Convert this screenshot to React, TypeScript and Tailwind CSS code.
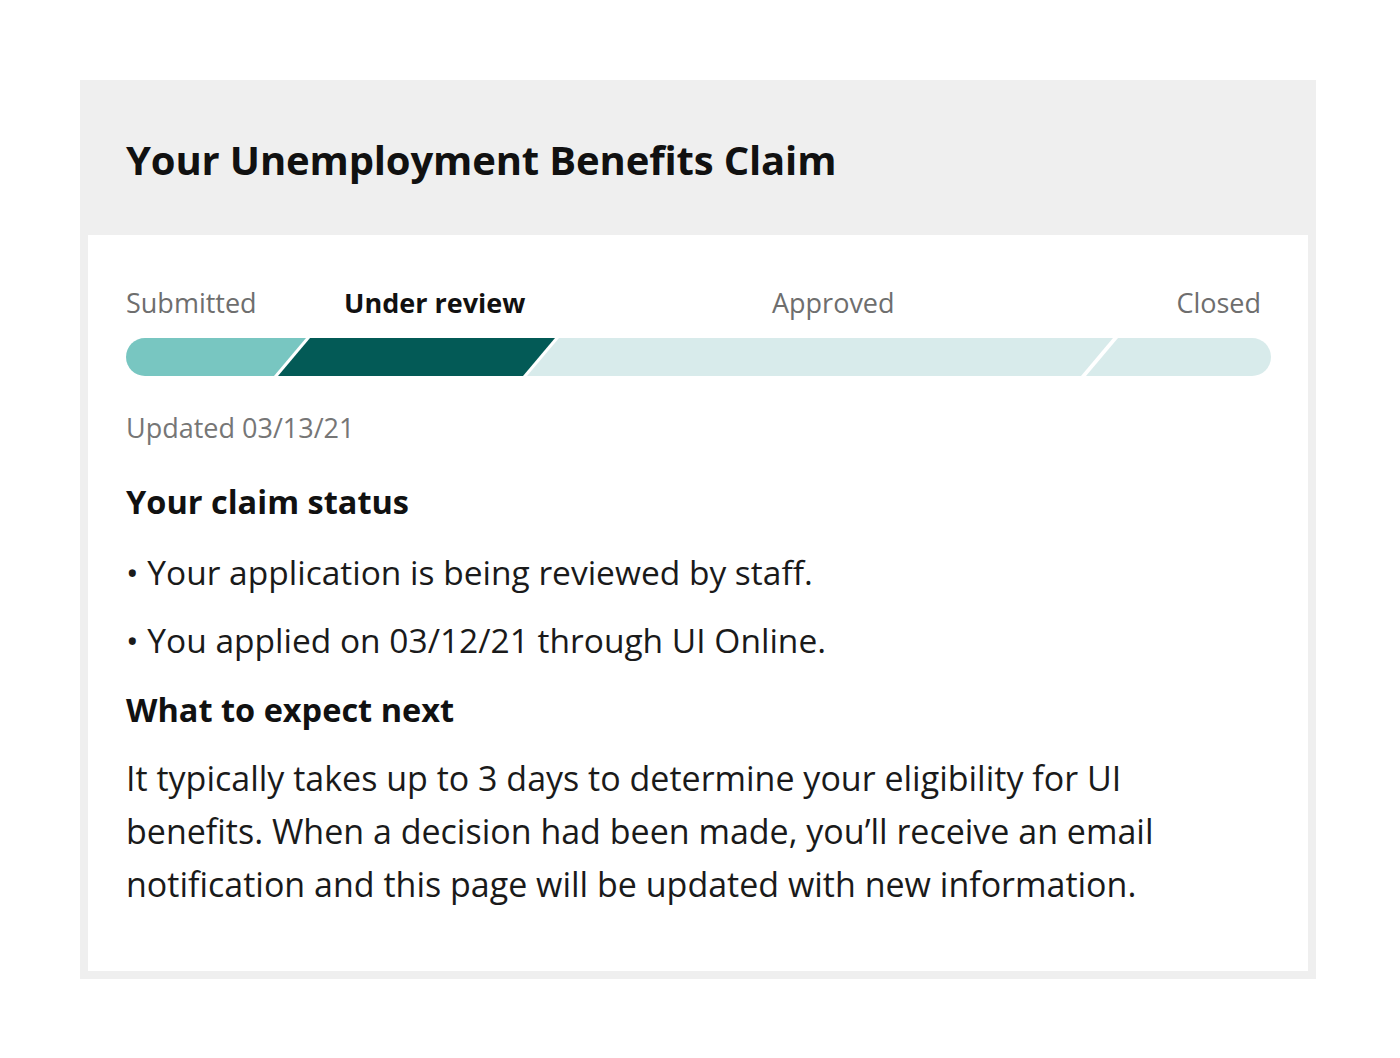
const font = { fontFamily: "'Open Sans', 'Noto Sans', sans-serif" };

function ProgressBar() {
  return (
    <svg className="block w-full h-[38px]" viewBox="0 0 1145 38" preserveAspectRatio="none">
      <path d="M19 0 H180 L148 38 H19 A19 19 0 0 1 19 0 Z" fill="#78c6c1" />
      <path d="M184 0 H429 L397 38 H152 Z" fill="#035a56" />
      <path d="M433 0 H987 L955 38 H401 Z" fill="#d8ebeb" />
      <path d="M992 0 H1126 A19 19 0 0 1 1126 38 H960 Z" fill="#d8ebeb" />
    </svg>
  );
}

export default function App() {
  return (
    <div className="min-h-[1058px] w-[1400px] bg-white pt-20 pl-20" style={font}>
      <div className="w-[1236px] bg-[#efefef] px-2 pb-2">
        <div className="h-[155px] flex items-center pl-[38px] pt-[4px]">
          <h1 className="text-[40px] font-bold text-[#111] tracking-[-0.15px]">
            Your Unemployment Benefits Claim
          </h1>
        </div>
        <div className="bg-white pl-[38px] pr-[37px] pt-[46px] pb-[60px]">
          <div className="grid grid-cols-[218px_428px_1fr_auto] items-end text-[27px] leading-[44px] text-[#6e6e6e]">
            <span>Submitted</span>
            <span className="font-bold text-[#111]">Under review</span>
            <span>Approved</span>
            <span className="pr-[10px]">Closed</span>
          </div>
          <div className="mt-[13px]">
            <ProgressBar />
          </div>
          <p className="mt-[32px] text-[27px] leading-[40px] text-[#767676]">Updated 03/13/21</p>
          <h2 className="mt-[32px] text-[32.5px] font-bold leading-[44px] text-[#111]">Your claim status</h2>
          <ul className="mt-[25px] flex flex-col gap-[22px] text-[33.5px] leading-[46px] text-[#1a1a1a]">
            <li>• Your application is being reviewed by staff.</li>
            <li>• You applied on 03/12/21 through UI Online.</li>
          </ul>
          <h2 className="mt-[25px] text-[32.5px] font-bold leading-[44px] text-[#111]">What to expect next</h2>
          <p className="mt-[20px] max-w-[1060px] text-[34px] leading-[53px] text-[#1a1a1a]">
            It typically takes up to 3 days to determine your eligibility for UI benefits. When a decision had
            been made, you’ll receive an email notification and this page will be updated with new information.
          </p>
        </div>
      </div>
    </div>
  );
}
